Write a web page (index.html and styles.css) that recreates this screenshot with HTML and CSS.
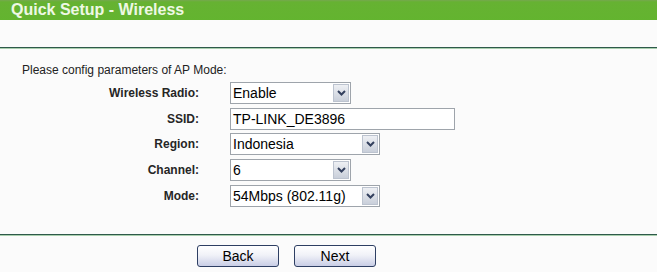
FILE: index.html
```html
<!DOCTYPE html>
<html lang="en">

<head>
    <meta charset="UTF-8">
    <title>Quick Setup - Wireless</title>
    <link rel="stylesheet" href="styles.css">
</head>

<body>
    <div class="header">Quick Setup - Wireless</div>
    <div class="rule rule-top"></div>

    <p class="intro">Please config parameters of AP Mode:</p>

    <div class="form">
        <label class="name">Wireless Radio:</label>
        <div class="select w-short">
            <span class="value">Enable</span>
            <span class="arrow"><svg width="9" height="6" viewBox="0 0 9 6"><path d="M1 1 L4.5 4.5 L8 1" /></svg></span>
        </div>

        <label class="name">SSID:</label>
        <div class="field"><span class="value">TP-LINK_DE3896</span></div>

        <label class="name">Region:</label>
        <div class="select w-long">
            <span class="value">Indonesia</span>
            <span class="arrow"><svg width="9" height="6" viewBox="0 0 9 6"><path d="M1 1 L4.5 4.5 L8 1" /></svg></span>
        </div>

        <label class="name">Channel:</label>
        <div class="select w-short">
            <span class="value">6</span>
            <span class="arrow"><svg width="9" height="6" viewBox="0 0 9 6"><path d="M1 1 L4.5 4.5 L8 1" /></svg></span>
        </div>

        <label class="name">Mode:</label>
        <div class="select w-long">
            <span class="value">54Mbps (802.11g)</span>
            <span class="arrow"><svg width="9" height="6" viewBox="0 0 9 6"><path d="M1 1 L4.5 4.5 L8 1" /></svg></span>
        </div>
    </div>

    <div class="rule rule-bottom"></div>

    <div class="buttons">
        <button class="btn">Back</button>
        <button class="btn">Next</button>
    </div>
</body>

</html>
```

FILE: styles.css
```css
html,
body {
    height: 100%;
}

body {
    margin: 0;
    background-color: #fbfbfb;
    font-family: 'Liberation Sans', Arial, sans-serif;
    color: #111;
}

.header {
    height: 20px;
    line-height: 20px;
    padding-left: 11px;
    font-size: 16px;
    font-weight: bold;
    color: #eef8e4;
    background: linear-gradient(180deg, #76a84e 0, #66b232 2px, #63b42f);
}

.rule {
    height: 1px;
    background-color: #2e5a4a;
    border-bottom: 1px solid #a9cfae;
}

.rule-top {
    margin-top: 27px;
}

.intro {
    margin: 14px 0 0 22px;
    font-size: 12px;
    line-height: 14px;
    color: #222;
}

.form {
    display: grid;
    grid-template-columns: 199px auto;
    grid-auto-rows: 25.8px;
    column-gap: 31px;
    align-items: center;
    justify-items: start;
    margin-top: 3px;
}

.name {
    justify-self: end;
    font-size: 12px;
    font-weight: bold;
    color: #262626;
}

.select,
.field {
    box-sizing: border-box;
    height: 22px;
    display: flex;
    align-items: center;
    border: 1px solid #9ea4ab;
    background-color: #fff;
    font-size: 14px;
    color: #000;
}

.value {
    flex: 1;
    padding-left: 2px;
    white-space: nowrap;
}

.w-short {
    width: 121px;
}

.w-long {
    width: 150px;
}

.field {
    width: 225px;
}

.arrow {
    box-sizing: border-box;
    width: 16px;
    height: 18px;
    margin-right: 1px;
    display: flex;
    align-items: center;
    justify-content: center;
    border: 1px solid #bcc3cf;
    background: linear-gradient(180deg, #eef0f4, #c9cfda);
}

.arrow path {
    fill: none;
    stroke: #33405e;
    stroke-width: 2;
}

.rule-bottom {
    margin-top: 25px;
}

.buttons {
    display: flex;
    gap: 15px;
    padding-left: 197px;
    margin-top: 9px;
}

.btn {
    width: 82px;
    height: 22px;
    padding: 0;
    border: 1px solid #2e3f63;
    border-radius: 3px;
    background: linear-gradient(180deg, #ffffff 0%, #f1f2f8 45%, #c9cee6 100%);
    font-family: 'Liberation Sans', Arial, sans-serif;
    font-size: 14px;
    color: #000;
}
```
